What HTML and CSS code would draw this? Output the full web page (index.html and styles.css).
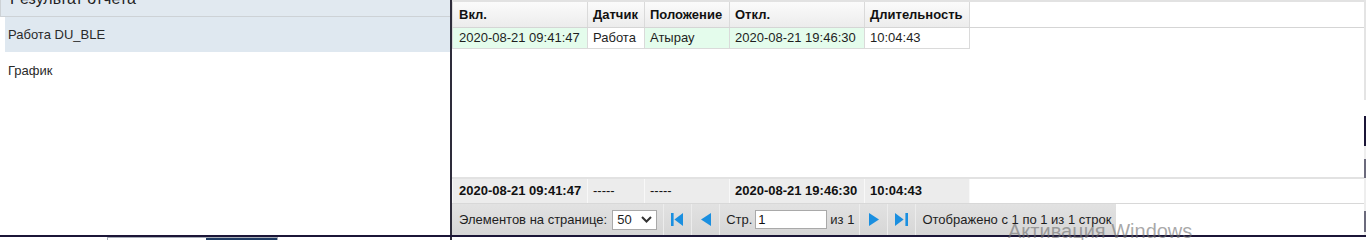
FILE: index.html
```html
<!DOCTYPE html>
<html lang="ru">
  <head>
    <meta charset="UTF-8" />
    <title>Результат отчета</title>
    <link rel="stylesheet" href="styles.css">
  </head>
  <body>
    <div class="screen">
      <!-- Left: report navigation -->
      <aside class="report-nav">
        <div class="nav-title"><span>Результат отчета</span></div>
        <div class="nav-item active">Работа DU_BLE</div>
        <div class="nav-item plain">График</div>
      </aside>

      <!-- Right: grid -->
      <main class="report-grid">
        <div class="grid-head">
          <div class="grid-row">
            <div class="cell">Вкл.</div>
            <div class="cell">Датчик</div>
            <div class="cell">Положение</div>
            <div class="cell">Откл.</div>
            <div class="cell">Длительность</div>
          </div>
        </div>

        <div class="grid-body">
          <div class="grid-row">
            <div class="cell mint">2020-08-21 09:41:47</div>
            <div class="cell">Работа</div>
            <div class="cell mint">Атырау</div>
            <div class="cell mint">2020-08-21 19:46:30</div>
            <div class="cell">10:04:43</div>
          </div>
        </div>

        <div class="grid-foot">
          <div class="grid-row">
            <div class="cell">2020-08-21 09:41:47</div>
            <div class="cell dash">-----</div>
            <div class="cell dash">-----</div>
            <div class="cell">2020-08-21 19:46:30</div>
            <div class="cell">10:04:43</div>
          </div>
        </div>

        <div class="pager">
          <span class="pg-label">Элементов на странице:</span>
          <span class="pg-select">50
            <svg width="11" height="7" viewBox="0 0 11 7"><path d="M1 1l4.5 4.5L10 1" fill="none" stroke="#333" stroke-width="2"/></svg>
          </span>
          <span class="pg-btn">
            <svg width="13" height="13" viewBox="0 0 13 13"><rect x="0" y="0" width="2.6" height="13" fill="#1a8fe0"/><polygon points="3.4,6.5 12,0 12,13" fill="#1a8fe0"/></svg>
          </span>
          <span class="pg-btn">
            <svg width="10" height="13" viewBox="0 0 10 13"><polygon points="0,6.5 10,0 10,13" fill="#1a8fe0"/></svg>
          </span>
          <span class="pg-page">
            Стр.
            <input class="pg-input" type="text" value="1">
            из 1
          </span>
          <span class="pg-btn">
            <svg width="10" height="13" viewBox="0 0 10 13"><polygon points="10,6.5 0,0 0,13" fill="#1a8fe0"/></svg>
          </span>
          <span class="pg-btn">
            <svg width="13" height="13" viewBox="0 0 13 13"><polygon points="8.6,6.5 0,0 0,13" fill="#1a8fe0"/><rect x="10.4" y="0" width="2.6" height="13" fill="#1a8fe0"/></svg>
          </span>
          <span class="pg-info">Отображено с 1 по 1 из 1 строк</span>
        </div>
      </main>

      <div class="edge"></div>
    </div>

    <div class="taskbar-line"></div>
    <div class="taskbar-strip">
      <span class="strip-box"><span class="strip-fill"></span></span>
      <span class="strip-divider"></span>
    </div>

    <!-- OS overlay -->
    <div class="watermark">Активация Windows</div>
  </body>
</html>
```

FILE: styles.css
```css
* {
  box-sizing: border-box;
}

body {
  margin: 0;
  width: 1366px;
  height: 240px;
  overflow: hidden;
  position: relative;
  background: #ffffff;
  font-family: "Liberation Sans", Arial, sans-serif;
  font-size: 13px;
  color: #1e1e1e;
}

.screen {
  display: flex;
  height: 235px;
}

/* Left navigation */
.report-nav {
  width: 452px;
  flex: none;
  border-right: 2px solid #2e2c3b;
}

.nav-title {
  height: 17px;
  overflow: hidden;
  padding-left: 9px;
  border-left: 1px solid #cdd2d6;
  border-bottom: 1px solid #cdd2d6;
  background: #e1e9f0;
  font-size: 16px;
  line-height: 16px;
}

.nav-title span {
  display: block;
  margin-top: -9px;
}

.nav-item {
  margin-left: 5px;
  padding-left: 3px;
  color: #2a2a2a;
}

.nav-item.active {
  height: 35px;
  line-height: 35px;
  background: #dfe8f0;
}

.nav-item.plain {
  line-height: 38px;
}

/* Grid */
.report-grid {
  flex: 1;
  min-width: 0;
  display: flex;
  flex-direction: column;
}

.grid-row {
  display: grid;
  grid-template-columns: 136px 57px 85px 135px 105px;
}

.cell {
  padding: 0 5px;
  border-right: 1px solid #dadada;
  white-space: nowrap;
}

.cell:first-child {
  padding-left: 6px;
  border-left: 1px solid #dadada;
}

.grid-head {
  border-top: 2px solid #e2e2e2;
  border-bottom: 1px solid #d5d5d5;
}

.grid-head .cell {
  height: 25px;
  line-height: 25px;
  font-weight: bold;
  color: #111;
  background: linear-gradient(#fbfbfb, #ececec);
}

.grid-body {
  flex: 1;
}

.grid-body .cell {
  height: 21px;
  line-height: 20px;
  border-bottom: 1px solid #dadada;
}

.grid-body .cell.mint {
  background: #e4fcec;
}

.grid-foot {
  border-top: 2px solid #e2e2e2;
  border-bottom: 1px solid #d8d8d8;
}

.grid-foot .cell {
  height: 24px;
  line-height: 24px;
  font-weight: bold;
  color: #111;
  background: #ececec;
  border-color: #f8f8f8;
}

.grid-foot .cell.dash {
  font-weight: normal;
}

/* Pager */
.pager {
  align-self: flex-start;
  display: flex;
  align-items: center;
  height: 31px;
  padding-left: 7px;
  background: linear-gradient(#e2e2e2, #d6d6d6);
}

.pg-label {
  margin-right: 5px;
}

.pg-select {
  display: flex;
  align-items: center;
  justify-content: space-between;
  width: 45px;
  height: 20px;
  margin-right: 6px;
  padding: 0 4px 0 4px;
  border: 1px solid #a9a9a9;
  background: #fff;
}

.pg-btn {
  display: flex;
  align-items: center;
  justify-content: center;
  width: 28px;
  height: 31px;
  border-left: 1px solid #ececec;
}

.pg-page {
  display: flex;
  align-items: center;
  gap: 3px;
  height: 31px;
  padding: 0 5px 0 6px;
  border-left: 1px solid #ececec;
}

.pg-input {
  width: 72px;
  height: 19px;
  padding: 0 2px;
  border: 1px solid #a9a9a9;
  font-family: inherit;
  font-size: 13px;
  color: #111;
}

.pg-info {
  height: 31px;
  line-height: 31px;
  padding: 0 5px 0 6px;
  border-left: 1px solid #ececec;
}

/* Right window edge */
.edge {
  width: 2px;
  flex: none;
  background: linear-gradient(#e4e4e4 0, #e4e4e4 100px, #fff 100px, #fff 116px,
    #1b1537 116px, #1b1537 146px, #eeeeee 146px, #eeeeee 159px,
    #6b6a7c 159px, #6b6a7c 178px, #eeeeee 178px, #eeeeee 211px,
    #6b6a7c 211px, #6b6a7c 232px, #eeeeee 232px);
}

/* Bottom of the OS screen */
.taskbar-line {
  height: 2px;
  background: #1b1537;
}

.taskbar-strip {
  display: flex;
  height: 3px;
}

.strip-box {
  display: flex;
  width: 171px;
  margin-left: 107px;
  border-top: 1px solid #a7adb7;
  border-left: 1px solid #a7adb7;
  border-right: 1px solid #a7adb7;
}

.strip-fill {
  width: 71px;
  margin-left: auto;
  background: #1f3b62;
}

.strip-divider {
  width: 2px;
  margin-left: 172px;
  background: #2e2c3b;
}

.watermark {
  position: absolute;
  left: 1008px;
  top: 221px;
  font-size: 20px;
  line-height: 20px;
  color: rgba(110, 110, 110, 0.6);
  white-space: nowrap;
}
```
